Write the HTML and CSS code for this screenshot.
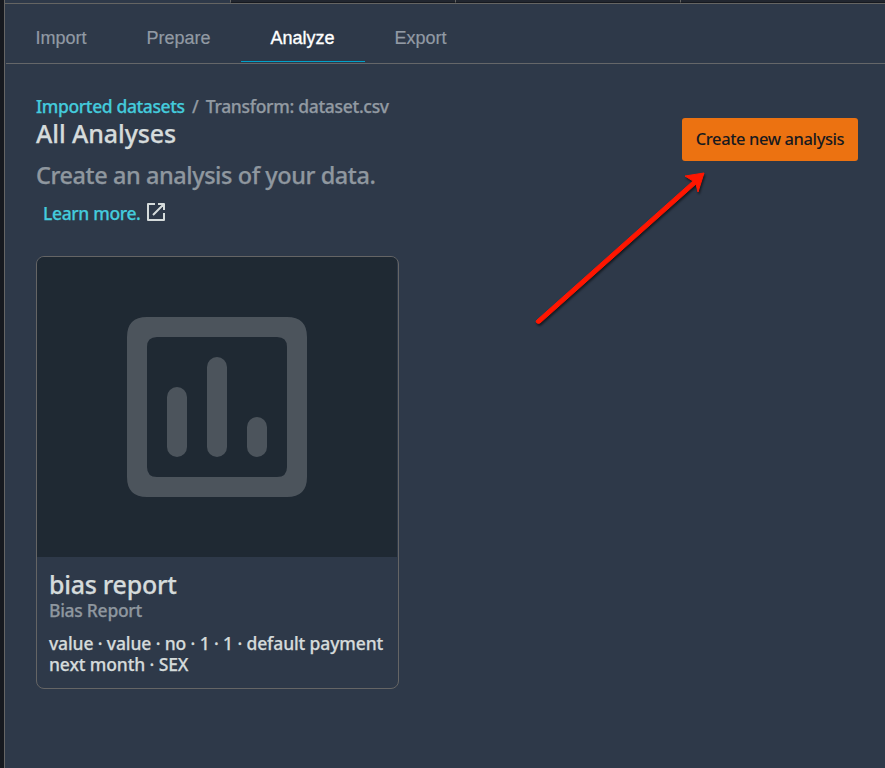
FILE: index.html
```html
<!DOCTYPE html>
<html lang="en">
<head>
<meta charset="utf-8">
<title>All Analyses</title>
<link rel="stylesheet" href="styles.css">
</head>
<body>
<div class="app">
  <div class="file-tabs"><span class="file-tab current"></span><span class="file-tab"></span><span class="file-tab"></span><span class="file-tab"></span></div>
  <nav class="nav">
    <a class="nav-item import">Import</a>
    <a class="nav-item prepare">Prepare</a>
    <a class="nav-item active">Analyze</a>
    <a class="nav-item export">Export</a>
  </nav>
  <main class="main">
    <header class="header">
      <div class="heading">
        <div class="crumbs"><a class="link">Imported datasets</a><span class="slash">/</span><span class="crumb">Transform: dataset.csv</span></div>
        <h1 class="title">All Analyses</h1>
        <p class="subtitle">Create an analysis of your data.</p>
        <div class="learn"><a class="link">Learn more.</a>
          <svg class="external" viewBox="0 0 18 18" width="18" height="18"><path d="M8 1H1V17H17V10M11 1H17V7M17 1L6 12" fill="none" stroke="#d5dbdb" stroke-width="2" stroke-linejoin="round"/></svg>
        </div>
      </div>
      <button class="create"><span>Create new analysis</span></button>
    </header>
    <article class="card">
      <div class="preview">
        <svg viewBox="0 0 180 180" width="180" height="180" fill="#4c545c"><path fill-rule="evenodd" d="M20 0H160Q180 0 180 20V160Q180 180 160 180H20Q0 180 0 160V20Q0 0 20 0ZM30 20Q20 20 20 30V150Q20 160 30 160H150Q160 160 160 150V30Q160 20 150 20Z"/><rect x="40" y="70" width="20" height="70" rx="10"/><rect x="80" y="40" width="20" height="100" rx="10"/><rect x="120" y="100" width="20" height="40" rx="10"/></svg>
      </div>
      <div class="info">
        <h2 class="name">bias report</h2>
        <p class="kind">Bias Report</p>
        <p class="details">value · value · no · 1 · 1 · default payment<br>next month · SEX</p>
      </div>
    </article>
  </main>
</div>
<svg class="arrow" viewBox="0 0 200 180" width="200" height="180"><path d="M17 160L173 21L165 16L184 13L178 32L176 24L20 163Q18 164 16.500 162.500Q15.500 161 17 160Z" fill="#ff1600" stroke="#ff1600" stroke-width="1"/></svg>
</body>
</html>
```
FILE: styles.css
```css
* { box-sizing: border-box; }
body { margin: 0; height: 768px; overflow: hidden; background: #16191f; font-family: "Noto Sans", sans-serif; font-weight: 500; color: #d5dbdb; }
h1, h2, p { margin: 0; font-weight: 500; }
.app { margin-left: 4px; height: 768px; border-left: 1px solid #656565; background: #2e3949; }
.file-tabs { display: flex; height: 4px; background: #21262f; border-bottom: 1px solid #656563; }
.file-tab { width: 225px; border-right: 1px solid #656563; border-bottom: 1px solid #16191f; flex: none; }
.file-tab.current { width: 226px; background: #2e3949; border-bottom-color: #2e3949; }
.nav { display: flex; height: 60px; margin-left: 1px; border-bottom: 1px solid #656769; font: 18px/68px "Liberation Sans", sans-serif; color: #929aa4; -webkit-text-stroke: .2px currentColor; }
.nav-item { height: 58px; text-align: center; white-space: nowrap; }
.import { width: 110px; }
.prepare { width: 125px; }
.active { width: 124px; padding-right: 1px; color: #fff; border-bottom: 1px solid #00a1c9; -webkit-text-stroke: .35px #fff; }
.export { width: 111px; }
.main { padding: 31px 27px 0 31px; -webkit-text-stroke: .25px currentColor; }
.header { display: flex; justify-content: space-between; height: 161px; white-space: nowrap; }
.crumbs { display: flex; height: 22px; font-size: 17.5px; line-height: 22px; letter-spacing: -.38px; color: #929aa2; }
.crumb { letter-spacing: -.3px; }
.link { color: #44cbdc; }
.slash { width: 21px; text-align: center; }
.title { margin-top: 1px; font-size: 25px; line-height: 30px; letter-spacing: -.1px; }
.subtitle { margin-top: 11px; font-size: 23.5px; line-height: 32px; letter-spacing: -.43px; color: #8f979f; }
.learn { display: flex; align-items: center; gap: 6px; margin: 10px 0 0 7px; height: 24px; font-size: 17.5px; line-height: 24px; letter-spacing: -.36px; }
.create { width: 176px; height: 43px; margin-top: 23px; padding: 0 0 2px; border: 0; border-radius: 3px; background: #ec7211; color: #16191f; font: 500 16.5px/41px "Noto Sans", sans-serif; letter-spacing: -.4px; -webkit-text-stroke: 0; }
.card { width: 363px; height: 433px; border: 1px solid #656565; border-radius: 8px; overflow: hidden; }
.preview { display: flex; width: 360px; height: 300px; align-items: center; justify-content: center; background: #1f2933; }
.info { padding: 11px 12px; white-space: nowrap; }
.name { font-size: 25px; line-height: 32px; letter-spacing: -.28px; }
.kind { font-size: 17.5px; line-height: 20px; letter-spacing: -.28px; color: #8f979f; }
.details { margin-top: 13px; font-size: 17.5px; line-height: 21px; letter-spacing: -.12px; }
.external { position: relative; top: -1px; }
.arrow { position: absolute; left: 520px; top: 160px; filter: drop-shadow(1px 2px 1px rgba(0,0,0,.55)); }
```
